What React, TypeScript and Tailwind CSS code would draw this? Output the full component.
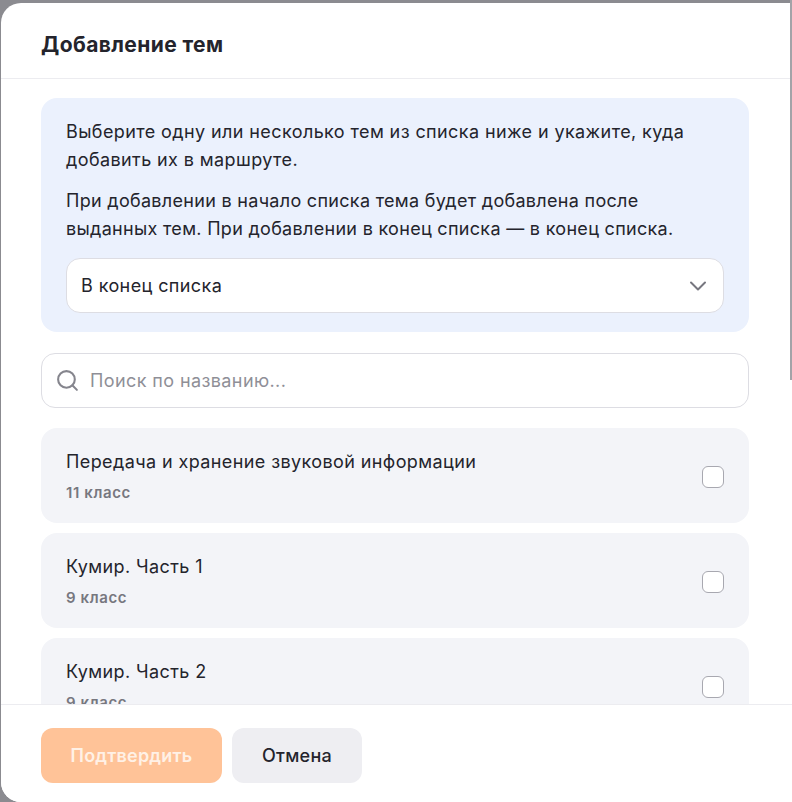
import { ChevronDown, Search } from "lucide-react";

const topics = [
  { title: "Передача и хранение звуковой информации", grade: "11 класс" },
  { title: "Кумир. Часть 1", grade: "9 класс" },
  { title: "Кумир. Часть 2", grade: "9 класс" },
];

export default function App() {
  return (
    <div className="relative h-[802px] w-[792px] overflow-hidden bg-[#8b8b90] pt-[3px] pl-px font-['Inter',sans-serif] text-[#24242c]">
      <div className="flex h-[799px] w-[791px] flex-col overflow-hidden rounded-l-[20px] bg-white">
        {/* Header */}
        <div className="flex h-[76px] shrink-0 items-center border-b border-[#ececf0] px-10 pt-[9px]">
          <h2 className="text-[21px] font-bold tracking-[0.4px]">Добавление тем</h2>
        </div>

        {/* Body */}
        <div className="min-h-0 flex-1 overflow-hidden pt-[19px] pr-[43px] pl-10">
          <div className="rounded-[16px] bg-[#ebf1fd] px-[25px] pt-5 pb-[19px]">
            <p className="text-[18px] leading-[28px] tracking-[0.4px]">
              Выберите одну или несколько тем из списка ниже и укажите, куда добавить их в маршруте.
            </p>
            <p className="mt-[13px] text-[18px] leading-[28px] tracking-[0.3px]">
              При добавлении в начало списка тема будет добавлена после выданных тем. При добавлении в конец списка — в конец списка.
            </p>
            <div className="mt-[15px] flex h-[55px] items-center justify-between rounded-[14px] border border-[#dddde3] bg-white pr-[11px] pl-[14px]">
              <span className="text-[18px] tracking-[0.4px]">В конец списка</span>
              <ChevronDown strokeWidth={1.7} className="h-7 w-7 text-[#77777f]" />
            </div>
          </div>

          <div className="mt-[21px] flex h-[55px] items-center gap-[10px] rounded-[14px] border border-[#dddde3] bg-white pl-[13px]">
            <Search className="h-[25px] w-[25px] text-[#85858d]" />
            <span className="text-[18px] tracking-[0.4px] text-[#8f8f97]">Поиск по названию...</span>
          </div>

          <div className="mt-[20px] flex flex-col gap-[10px]">
            {topics.map((t) => (
              <div key={t.title} className="flex h-[95px] shrink-0 items-center justify-between rounded-[16px] bg-[#f3f4f8] px-[25px]">
                <div className="pt-[2px]">
                  <div className="text-[18px] leading-[24px] tracking-[0.4px]">{t.title}</div>
                  <div className="mt-[9px] text-[15px] leading-[20px] font-semibold tracking-[0.6px] text-[#77777f]">{t.grade}</div>
                </div>
                <div className="mt-[3px] h-[22px] w-[22px] rounded-[6px] border border-[#a8a8b0] bg-white" />
              </div>
            ))}
          </div>
        </div>

        {/* Footer */}
        <div className="flex h-[98px] shrink-0 items-start gap-[10px] border-t border-[#ececf0] bg-white px-10 pt-[23px]">
          <button className="h-[55px] w-[181px] rounded-[12px] bg-[#ffc398] text-[18px] font-semibold tracking-[0.2px] text-[#fff1e6]">Подтвердить</button>
          <button className="h-[55px] w-[130px] rounded-[12px] bg-[#eeeef2] text-[18px] font-medium tracking-[0.3px] text-[#24242c]">Отмена</button>
        </div>
      </div>
      {/* page scrollbar showing past the dialog */}
      <div className="absolute top-0 right-0 h-[380px] w-[2px] bg-[#a3a3a8]" />
    </div>
  );
}
